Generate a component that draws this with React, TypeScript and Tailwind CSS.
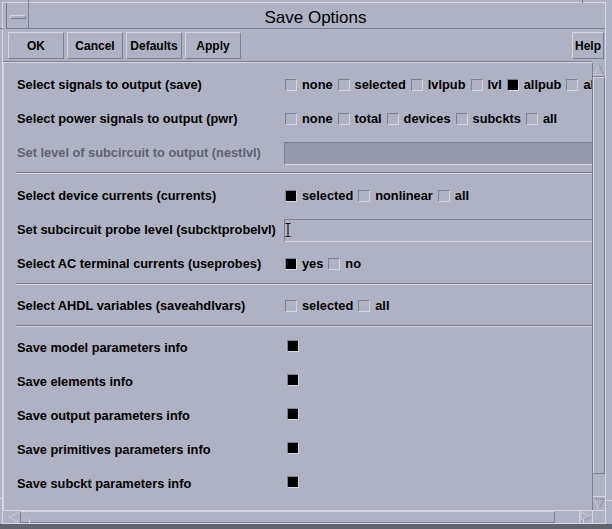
import React from "react";

const Box = ({ on }: { on?: boolean }) => (
  <span
    className={
      "inline-block shrink-0 w-[12px] h-[12px] border border-t-[#7c8090] border-l-[#7c8090] border-b-[#d4d7e1] border-r-[#d4d7e1] " +
      (on ? "bg-black" : "bg-[#aeb2c3]")
    }
  />
);

const Opt = ({ label, on }: { label: string; on?: boolean }) => (
  <span className="flex items-center shrink-0">
    <Box on={on} />
    <span className="ml-[5px] mr-[5px]">{label}</span>
  </span>
);

const Row = ({
  label,
  disabled,
  children,
}: {
  label: string;
  disabled?: boolean;
  children?: React.ReactNode;
}) => (
  <div className="h-[34px] flex items-center shrink-0">
    <div className={"w-[281px] shrink-0 pl-[13px] " + (disabled ? "text-[#5f6371]" : "")}>{label}</div>
    <div className="flex items-center shrink-0 whitespace-nowrap">{children}</div>
  </div>
);

const Sep = ({ wide }: { wide?: boolean }) => (
  <div
    className={
      "ml-[12px] mt-[2px] h-[2px] shrink-0 border-t border-t-[#7c8090] border-b border-b-[#d4d7e1] " +
      (wide ? "mb-[5px]" : "mb-[4px]")
    }
  />
);

const Field = ({ disabled, cursor }: { disabled?: boolean; cursor?: boolean }) => (
  <div
    className={
      "-ml-[1px] w-[330px] h-[23px] shrink-0 flex items-center border border-t-[#7c8090] border-l-[#7c8090] border-b-[#d4d7e1] border-r-[#d4d7e1] " +
      (disabled ? "bg-[#9599a9]" : "bg-[#aeb2c3]")
    }
  >
    {cursor && (
      <svg width="7" height="14" viewBox="0 0 7 14">
        <path d="M0.5 0.5h5M3 0.5v13M0.5 13.5h5" stroke="#000" strokeWidth="1" fill="none" />
      </svg>
    )}
  </div>
);

const Btn = ({ children, wide = true }: { children: React.ReactNode; wide?: boolean }) => (
  <div
    className={
      "h-[27px] flex items-center justify-center font-bold text-[12px] border border-t-[#d4d7e1] border-l-[#d4d7e1] border-r-[#7c8090] border-b-[#7c8090] " +
      (wide ? "w-[56px]" : "w-[32px]")
    }
  >
    {children}
  </div>
);

const Arrow = ({ dir }: { dir: "up" | "down" | "left" | "right" }) => {
  const light = "#e2e4ec";
  const dark = "#6c7080";
  return (
    <svg width="12" height="12" viewBox="0 0 12 12">
      {dir === "up" && (
        <>
          <path d="M6 1L1 11H11" stroke={light} strokeDasharray="1 1" fill="none" />
          <path d="M6 1L11 11" stroke={dark} strokeDasharray="1 1" fill="none" />
        </>
      )}
      {dir === "down" && (
        <>
          <path d="M1 1H11L6 11" stroke={dark} strokeDasharray="1 1" fill="none" />
          <path d="M1 1L6 11" stroke={light} strokeDasharray="1 1" fill="none" />
        </>
      )}
      {dir === "left" && (
        <path d="M11 1L1 6L11 11" stroke={light} strokeDasharray="1 1" fill="none" />
      )}
      {dir === "right" && (
        <>
          <path d="M1 11V1L11 6" stroke={light} strokeDasharray="1 1" fill="none" />
          <path d="M1 11L11 6" stroke={dark} strokeDasharray="1 1" fill="none" />
        </>
      )}
    </svg>
  );
};

export default function App() {
  return (
    <div className="relative w-[612px] h-[529px] bg-[#aeb2c3] overflow-hidden flex flex-col border-b-[5px] border-b-[#60646f] font-['Liberation_Sans',Arial,sans-serif] text-black">
      {/* resize handle ticks on the frame */}
      <div className="absolute left-[28px] top-0 w-[1px] h-[3px] bg-[#7c8090]" />
      <div className="absolute left-[582px] top-0 w-[1px] h-[3px] bg-[#7c8090]" />
      <div className="absolute left-0 top-[28px] w-[3px] h-[1px] bg-[#7c8090]" />
      <div className="absolute left-0 top-[498px] w-[3px] h-[1px] bg-[#d4d7e1]" />
      <div className="absolute right-0 top-[500px] w-[6px] h-[1px] bg-[#d4d7e1]" />
      <div className="absolute left-[29px] bottom-0 w-[1px] h-[5px] bg-[#d4d7e1]" />
      <div className="absolute left-[583px] bottom-0 w-[1px] h-[5px] bg-[#d4d7e1]" />

      <div className="flex-1 min-h-0 ml-[2px] mt-[2px] mr-[6px] border border-[#d4d7e1] flex flex-col">
        {/* title bar */}
        <div className="h-[26px] shrink-0 flex ml-[3px] border-b border-b-[#7c8090]">
          <div className="w-[23px] shrink-0 border-l border-l-[#7c8090] border-r border-r-[#7c8090] flex items-center justify-center">
            <div className="w-[16px] h-[4px] mt-[2px] border border-t-[#d4d7e1] border-l-[#d4d7e1] border-b-[#7c8090] border-r-[#7c8090]" />
          </div>
          <div className="flex-1 flex items-center justify-center pt-[5px] text-[17px] -ml-[3px]">Save Options</div>
        </div>

        {/* buttons */}
        <div className="shrink-0 flex items-center justify-between pl-[5px] pr-[1px] pt-[3px] pb-[2px]">
          <div className="flex gap-[3px]">
            <Btn>OK</Btn>
            <Btn>Cancel</Btn>
            <Btn>Defaults</Btn>
            <Btn>Apply</Btn>
          </div>
          <Btn wide={false}>Help</Btn>
        </div>
        <div className="h-[2px] shrink-0 border-t border-t-[#7c8090] border-b border-b-[#d4d7e1] mr-[13px]" />

        {/* scrolled area */}
        <div className="flex-1 min-h-0 flex">
          <div className="flex-1 min-w-0 overflow-hidden flex flex-col pt-[5px] text-[12.8px] font-bold border-l border-l-[#d4d7e1]">
            <Row label="Select signals to output (save)">
              <Opt label="none" />
              <Opt label="selected" />
              <Opt label="lvlpub" />
              <Opt label="lvl" />
              <Opt label="allpub" on />
              <Opt label="all" />
            </Row>
            <Row label="Select power signals to output (pwr)">
              <Opt label="none" />
              <Opt label="total" />
              <Opt label="devices" />
              <Opt label="subckts" />
              <Opt label="all" />
            </Row>
            <Row label="Set level of subcircuit to output (nestlvl)" disabled>
              <Field disabled />
            </Row>
            <Sep wide />
            <Row label="Select device currents (currents)">
              <Opt label="selected" on />
              <Opt label="nonlinear" />
              <Opt label="all" />
            </Row>
            <Row label="Set subcircuit probe level (subcktprobelvl)">
              <Field cursor />
            </Row>
            <Row label="Select AC terminal currents (useprobes)">
              <Opt label="yes" on />
              <Opt label="no" />
            </Row>
            <Sep />
            <Row label="Select AHDL variables (saveahdlvars)">
              <Opt label="selected" />
              <Opt label="all" />
            </Row>
            <Sep />
            <Row label="Save model parameters info">
              <span className="ml-[2px]"><Box on /></span>
            </Row>
            <Row label="Save elements info">
              <span className="ml-[2px]"><Box on /></span>
            </Row>
            <Row label="Save output parameters info">
              <span className="ml-[2px]"><Box on /></span>
            </Row>
            <Row label="Save primitives parameters info">
              <span className="ml-[2px]"><Box on /></span>
            </Row>
            <Row label="Save subckt parameters info">
              <span className="ml-[2px]"><Box on /></span>
            </Row>
          </div>

          {/* vertical scrollbar */}
          <div className="w-[13px] shrink-0 flex flex-col border-l border-l-[#7c8090]">
            <div className="h-[14px] shrink-0 flex items-center justify-center border-b border-b-[#7c8090]">
              <Arrow dir="up" />
            </div>
            <div className="flex-1 border border-t-[#d4d7e1] border-l-[#d4d7e1] border-r-[#7c8090] border-b-[#7c8090]" />
            <div className="h-[22px] shrink-0" />
            <div className="h-[14px] shrink-0 flex items-center justify-center border-t border-t-[#d4d7e1]">
              <Arrow dir="down" />
            </div>
          </div>
        </div>

        {/* horizontal scrollbar */}
        <div className="h-[13px] shrink-0 flex border-t border-t-[#d4d7e1]">
          <div className="flex-1 flex pl-[4px]">
            <div className="w-[13px] shrink-0 flex items-center justify-center">
              <Arrow dir="left" />
            </div>
            <div className="flex-1 border border-t-[#d4d7e1] border-l-[#7c8090] border-r-[#7c8090] border-b-[#7c8090]" />
            <div className="w-[24px] shrink-0" />
            <div className="w-[13px] shrink-0 flex items-center justify-center border-l border-l-[#d4d7e1]">
              <Arrow dir="right" />
            </div>
          </div>
          <div className="w-[13px] shrink-0 border-l border-l-[#d4d7e1]" />
        </div>
      </div>
    </div>
  );
}
